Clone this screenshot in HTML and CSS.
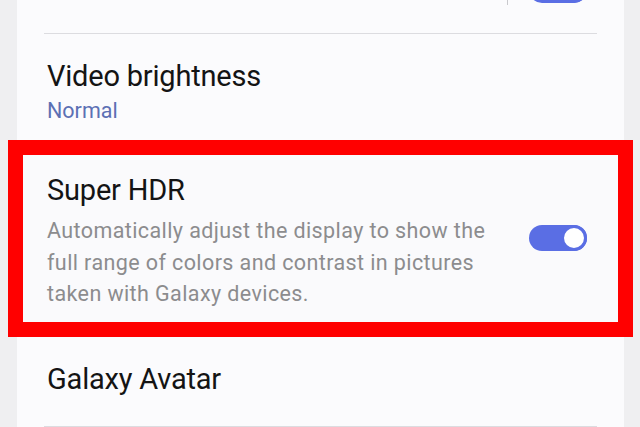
FILE: index.html
```html
<!DOCTYPE html>
<html>
<head>
<meta charset="utf-8">
<link rel="stylesheet" href="styles.css">
</head>
<body>
<div class="card">
  <div class="item item-top">
    <div class="spacer"></div>
    <div class="vline"></div>
    <div class="toggle"><div class="thumb"></div></div>
  </div>
  <div class="divider"></div>
  <div class="item item-video">
    <div class="title">Video brightness</div>
    <div class="sub">Normal</div>
  </div>
  <div class="item item-hdr">
    <div class="text">
      <div class="title">Super HDR</div>
      <div class="desc">Automatically adjust the display to show the full range of colors and contrast in pictures taken with Galaxy devices.</div>
    </div>
    <div class="toggle"><div class="thumb"></div></div>
  </div>
  <div class="item item-avatar">
    <div class="title">Galaxy Avatar</div>
  </div>
  <div class="divider"></div>
</div>
</body>
</html>
```
FILE: styles.css
```css
html, body {
  margin: 0;
  padding: 0;
  background: #efeff1;
  height: 100%;
  overflow: hidden;
}
body {
  font-family: Roboto, "Noto Sans", sans-serif;
}
.card {
  margin: -40px 16px 0 17px;
  padding-bottom: 1px;
  background: #fbfbfd;
}
.item {
  padding: 0 30px;
}
.item-top {
  height: 73px;
  display: flex;
  align-items: flex-end;
  box-sizing: border-box;
}
.item-top .spacer { flex: 1; }
.item-top .vline {
  width: 1px;
  height: 40px;
  background: #c9c9cd;
  margin-right: 21px;
  margin-bottom: 28px;
}
.item-top .toggle {
  margin-bottom: 30px;
  margin-right: 7px;
}
.divider {
  height: 1px;
  background: #dcdce0;
  margin: 0 27px;
}
.title {
  font-size: 29px;
  line-height: 34px;
  color: #141414;
  letter-spacing: -0.2px;
}
.sub {
  font-size: 21.5px;
  line-height: 28px;
  color: #5c70b4;
  margin-top: 4px;
}
.item-video {
  padding-top: 25px;
  padding-bottom: 15px;
}
.item-hdr {
  margin: 0 -9px;
  border: 15px solid #ff0000;
  background: #fafafc;
  padding: 18px 31px 12px 24px;
  display: flex;
  align-items: center;
}
.item-hdr .text { flex: 1; }
.desc {
  font-size: 21.5px;
  line-height: 31.5px;
  letter-spacing: 0.4px;
  color: #8c8c8e;
  margin-top: 8px;
  max-width: 452px;
}
.toggle {
  width: 58px;
  height: 26px;
  border-radius: 13px;
  background: #5a6ee4;
  position: relative;
  flex: none;
}
.item-hdr .toggle { margin-top: -6px; }
.thumb {
  position: absolute;
  right: 0;
  top: 0;
  width: 20px;
  height: 20px;
  border-radius: 50%;
  background: #ffffff;
  border: 3px solid #5a6ee4;
}
.item-avatar {
  padding-top: 25px;
  padding-bottom: 30px;
}
```
